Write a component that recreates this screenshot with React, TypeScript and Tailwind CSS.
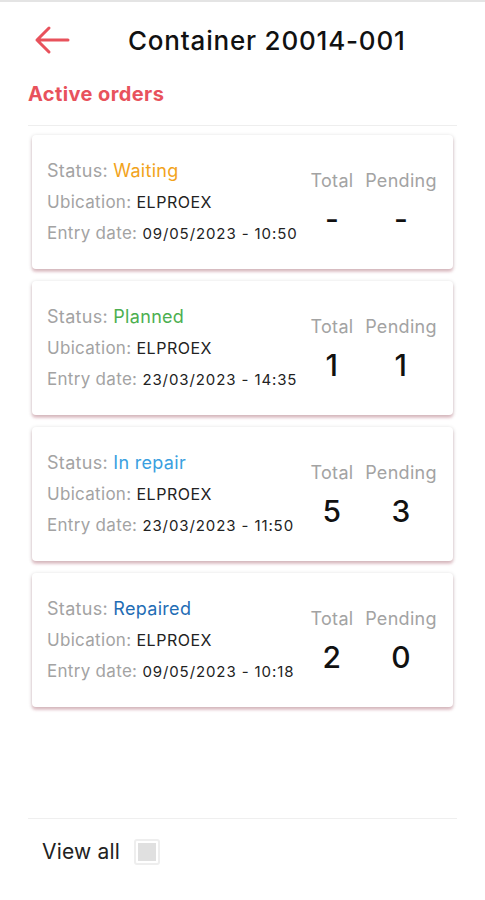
const orders = [
  { status: 'Waiting', color: 'text-[#f2a31b]', date: '09/05/2023 - 10:50', total: '-', pending: '-' },
  { status: 'Planned', color: 'text-[#4caf50]', date: '23/03/2023 - 14:35', total: '1', pending: '1' },
  { status: 'In repair', color: 'text-[#3a9fe0]', date: '23/03/2023 - 11:50', total: '5', pending: '3' },
  { status: 'Repaired', color: 'text-[#1f6db5]', date: '09/05/2023 - 10:18', total: '2', pending: '0' },
];

function OrderCard({ order }: { order: (typeof orders)[number] }) {
  return (
    <div className="flex items-center h-[134px] mx-[4px] pl-[15px] pr-[14px] bg-white rounded-[4px] shadow-[0_1px_4px_rgba(0,0,0,0.18),0_3px_3px_rgba(200,90,110,0.28)]">
      <div className="flex-1 flex flex-col gap-[7px] text-[#a3a3a3] tracking-[0.3px]">
        <div className="text-[18px] leading-[24px]">
          Status: <span className={order.color}>{order.status}</span>
        </div>
        <div className="text-[17px] leading-[24px]">
          Ubication: <span className="text-[#222] text-[16px] tracking-[0.5px]">ELPROEX</span>
        </div>
        <div className="text-[17px] leading-[24px]">
          Entry date: <span className="text-[#222] text-[15px] tracking-[0.9px]">{order.date}</span>
        </div>
      </div>
      <div className="flex gap-[3px] text-center mt-[1px] tracking-[0.3px]">
        <div className="flex flex-col items-center w-[56px]">
          <span className="text-[18px] text-[#a3a3a3] leading-[24px]">Total</span>
          <span className="text-[30px] font-medium text-[#111] leading-[36px] mt-[8px]">{order.total}</span>
        </div>
        <div className="flex flex-col items-center w-[76px]">
          <span className="text-[18px] text-[#a3a3a3] leading-[24px]">Pending</span>
          <span className="text-[30px] font-medium text-[#111] leading-[36px] mt-[8px]">{order.pending}</span>
        </div>
      </div>
    </div>
  );
}

export default function App() {
  return (
    <div className="h-[900px] flex flex-col bg-white font-['Inter',sans-serif] border-t-2 border-[#e4e4e4]">
      <div className="flex items-center h-[76px] pl-[34px]">
        <svg width="36" height="30" viewBox="0 0 36 30" fill="none" stroke="#e8525c" strokeWidth="3" strokeLinecap="round" strokeLinejoin="round">
          <path d="M34 15H3M15 3L3 15l12 12" />
        </svg>
        <h1 className="ml-[58px] text-[26px] tracking-[0.8px] font-medium text-[#111]">Container 20014-001</h1>
      </div>
      <div className="px-[28px] text-[20px] tracking-[0.4px] font-bold text-[#e8525c] leading-[28px] mt-[2px]">Active orders</div>
      <div className="mx-[28px] mt-[17px] border-t border-[#eeeeee]" />
      <div className="flex flex-col gap-[12px] px-[28px] mt-[9px]">
        {orders.map((o) => (
          <OrderCard key={o.status} order={o} />
        ))}
      </div>
      <div className="flex-1" />
      <div className="mx-[28px] border-t border-[#efefef]" />
      <div className="flex items-center gap-[14px] pl-[42px] h-[66px] mb-[15px]">
        <span className="text-[21px] tracking-[0.2px] text-[#222]">View all</span>
        <span className="w-[26px] h-[26px] border-2 border-[#eeeeee] rounded-[3px] flex items-center justify-center">
          <span className="w-[18px] h-[18px] bg-[#e0e0e0]" />
        </span>
      </div>
    </div>
  );
}
